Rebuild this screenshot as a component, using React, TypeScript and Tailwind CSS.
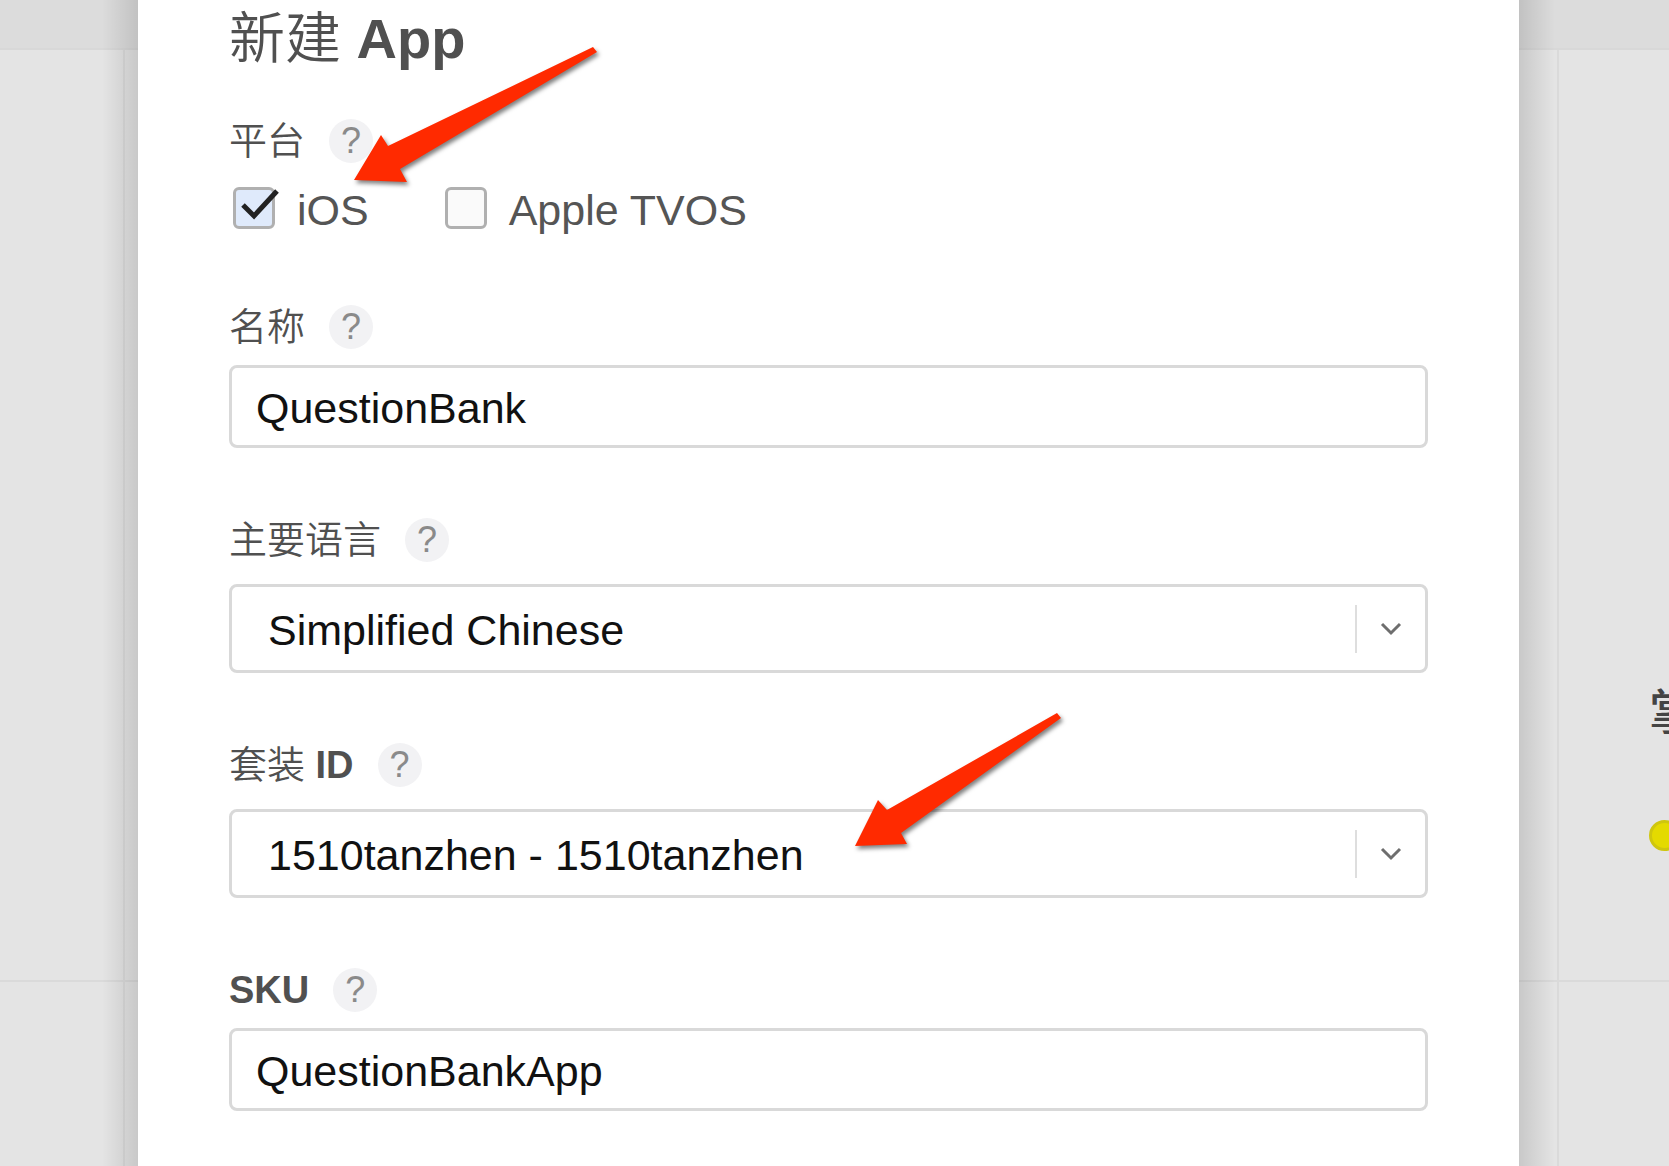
import {useState} from "react";
import type {ReactNode} from "react";

const languages = ["Simplified Chinese", "Traditional Chinese", "English"];
const bundleIds = ["1510tanzhen - 1510tanzhen"];

function Help() {
    return (
        <button
            type="button"
            aria-label="帮助"
            className="flex size-11 shrink-0 items-center justify-center rounded-full bg-[#f2f2f4] text-4xl font-normal text-[#8a8a8a]">
            ?
        </button>
    )
}

function FieldLabel({htmlFor, children}: { htmlFor?: string, children: ReactNode }) {
    return (
        <div className="flex h-11 items-center gap-6 text-[38px] leading-none font-[350] text-[#505050]">
            {htmlFor ? <label htmlFor={htmlFor}>{children}</label> : <span>{children}</span>}
            <Help/>
        </div>
    )
}

function Arrow({points, className}: { points: string, className: string }) {
    return (
        <svg
            width="260"
            height="170"
            viewBox="0 0 260 170"
            aria-hidden="true"
            className={`pointer-events-none absolute z-10 drop-shadow-[2px_3px_2px_rgba(0,0,0,0.5)] ${className}`}>
            <polygon points={points} fill="#ff2a00"/>
        </svg>
    )
}

function PlatformCheckbox({label, checked, onChange}: { label: string, checked: boolean, onChange: () => void }) {
    return (
        <label className="flex items-center gap-[22px]">
            <span className="relative size-[42px]">
                <input
                    type="checkbox"
                    checked={checked}
                    onChange={onChange}
                    className="block size-full appearance-none rounded-md border-3 border-[#b0b0b0] bg-[#fafafa] checked:bg-[#dfeafb]"
                />
                {checked && (
                    <svg width="48" height="42" viewBox="0 0 48 42" aria-hidden="true"
                         className="pointer-events-none absolute top-0 left-0">
                        <path d="M10 18 L21 29 L44 4" fill="none" stroke="#222" strokeWidth="5"/>
                    </svg>
                )}
            </span>
            <span className="pt-1 text-[43px] leading-[38px] text-[#555]">{label}</span>
        </label>
    )
}

function TextField({id, value, onChange}: { id: string, value: string, onChange: (value: string) => void }) {
    return (
        <input
            id={id}
            type="text"
            value={value}
            onChange={(e) => onChange(e.target.value)}
            className="mt-4 block h-[83px] w-full rounded-lg border-3 border-[#d9d9d9] bg-white px-6 pt-1 text-[43px] text-[#111]"
        />
    )
}

function SelectField({id, options}: { id: string, options: string[] }) {
    return (
        <div className="mt-[22px] flex h-[89px] items-center rounded-lg border-3 border-[#d9d9d9] bg-white">
            <select
                id={id}
                className="h-full min-w-0 flex-1 appearance-none pt-1 pl-9 text-[43px] text-[#111]">
                {options.map((option) => <option key={option}>{option}</option>)}
            </select>
            <span className="h-12 w-[2px] bg-[#dedede]"/>
            <svg width="68" height="24" viewBox="0 0 68 24" aria-hidden="true">
                <path d="M25 7 L34 16 L43 7" fill="none" stroke="#6e6e6e" strokeWidth="3"/>
            </svg>
        </div>
    )
}

export default function App() {
    const [ios, setIos] = useState(true);
    const [tvos, setTvos] = useState(false);
    const [name, setName] = useState("QuestionBank");
    const [sku, setSku] = useState("QuestionBankApp");

    return (
        <div className="flex min-h-screen overflow-hidden bg-[#e4e4e4] font-['Liberation_Sans','Noto_Sans_CJK_SC',sans-serif]">
            <div className="relative flex w-[138px] shrink-0 flex-col">
                <div className="h-[50px] border-b-2 border-[#d8d8d8] bg-[#dcdcdc]"/>
                <div className="mr-[13px] h-[930px] border-r-2 border-[#dadada]"/>
                <div className="border-t-2 border-[#dadada]"/>
                <div className="mr-[13px] flex-1 border-r-2 border-[#dadada]"/>
                <div className="absolute inset-y-0 right-0 w-9 bg-linear-to-r from-transparent to-black/12"/>
            </div>

            <main className="min-w-0 flex-1 bg-white px-[91px] pb-12">
                <h1 className="pt-2 text-[56px] leading-[62px] font-[350] text-[#505050]">
                    新建 <b className="font-bold">App</b>
                </h1>

                <section className="relative mt-[49px]">
                    <FieldLabel>平台</FieldLabel>
                    <div className="mt-6 flex gap-[76px] pl-1">
                        <PlatformCheckbox label="iOS" checked={ios} onChange={() => setIos(!ios)}/>
                        <PlatformCheckbox label="Apple TVOS" checked={tvos} onChange={() => setTvos(!tvos)}/>
                    </div>
                    <Arrow className="-top-20 left-[120px]" points="5,141 32,96 39,107 244,8 248,13 51,130 58,143"/>
                </section>

                <section className="mt-[76px]">
                    <FieldLabel htmlFor="name">名称</FieldLabel>
                    <TextField id="name" value={name} onChange={setName}/>
                </section>

                <section className="mt-[70px]">
                    <FieldLabel htmlFor="language">主要语言</FieldLabel>
                    <SelectField id="language" options={languages}/>
                </section>

                <section className="relative mt-[70px]">
                    <FieldLabel htmlFor="bundle">套装 <b className="font-bold">ID</b></FieldLabel>
                    <SelectField id="bundle" options={bundleIds}/>
                    <Arrow className="-top-9 left-[620px]" points="6,139 29,93 38,103 208,6 212,11 52,126 58,137"/>
                </section>

                <section className="mt-[70px]">
                    <FieldLabel htmlFor="sku"><b className="font-bold">SKU</b></FieldLabel>
                    <TextField id="sku" value={sku} onChange={setSku}/>
                </section>
            </main>

            <div className="relative flex w-[150px] shrink-0 flex-col">
                <div className="h-[50px] border-b-2 border-[#d8d8d8] bg-[#dcdcdc]"/>
                <div className="ml-[38px] h-[930px] overflow-hidden border-l-2 border-[#dadada] pt-[638px] pl-[90px]">
                    <p className="w-12 text-[48px] leading-[50px] font-medium text-[#444]">掌</p>
                    <div className="mt-[82px] size-[31px] rounded-full border-3 border-[#cfc60e] bg-[#e4da00]"/>
                </div>
                <div className="border-t-2 border-[#dadada]"/>
                <div className="ml-[38px] flex-1 border-l-2 border-[#dadada]"/>
                <div className="absolute inset-y-0 left-0 w-9 bg-linear-to-l from-transparent to-black/12"/>
            </div>
        </div>
    )
}
